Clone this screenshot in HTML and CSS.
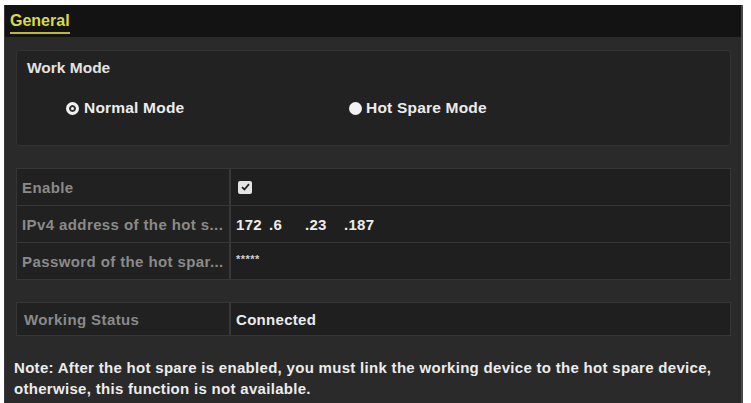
FILE: index.html
```html
<!DOCTYPE html>
<html>
<head>
<meta charset="utf-8">
<link rel="stylesheet" href="styles.css">
</head>
<body>
<div class="panel">
  <div class="tabs"><span class="tab">General</span></div>
  <div class="content">
    <div class="workmode">
      <div class="wm-title">Work Mode</div>
      <div class="radios">
        <label class="radio r1"><span class="dot checked"></span>Normal Mode</label>
        <label class="radio r2"><span class="dot"></span>Hot Spare Mode</label>
      </div>
    </div>
    <div class="table t1">
      <div class="row">
        <div class="lab">Enable</div>
        <div class="val"><span class="check"><svg width="9" height="8" viewBox="0 0 9 8"><path d="M1 4.2 L3.4 6.5 L8 1.2" fill="none" stroke="#222" stroke-width="1.8"/></svg></span></div>
      </div>
      <div class="row">
        <div class="lab">IPv4 address of the hot s...</div>
        <div class="val ip"><span class="s1">172</span><span class="s2">.6</span><span class="s3">.23</span><span class="s4">.187</span></div>
      </div>
      <div class="row">
        <div class="lab">Password of the hot spar...</div>
        <div class="val pw">*****</div>
      </div>
    </div>
    <div class="table t2">
      <div class="row">
        <div class="lab">Working Status</div>
        <div class="val">Connected</div>
      </div>
    </div>
    <p class="note">Note: After the hot spare is enabled, you must link the working device to the hot spare device,<br>otherwise, this function is not available.</p>
  </div>
</div>
</body>
</html>
```
FILE: styles.css
```css
html, body {
  margin: 0;
  padding: 0;
  background: #ffffff;
}
body {
  font-family: "Liberation Sans", Arial, sans-serif;
  width: 751px;
  height: 403px;
  overflow: hidden;
}
.panel {
  margin: 5px 0 0 4px;
  width: 739px;
  height: 398px;
  background: #2a2a2a;
  border-left: 1px solid #3a3a3a;
  border-right: 2px solid #4a4a4a;
  box-sizing: border-box;
}
.tabs {
  height: 32px;
  background: #131313;
  padding-left: 5px;
  display: flex;
  align-items: flex-end;
}
.tab {
  color: #d9d94a;
  font-weight: bold;
  font-size: 16px;
  line-height: 18px;
  padding-bottom: 2px;
  margin-bottom: 3px;
  border-bottom: 2px solid #b8b83a;
}
.content {
  padding: 13px 10px 0 11px;
}
.workmode {
  height: 96px;
  box-sizing: border-box;
  background: #222222;
  border: 1px solid #333333;
  border-radius: 4px;
  padding: 8px 0 0 10px;
}
.wm-title {
  color: #e2e2e2;
  font-weight: bold;
  font-size: 15.5px;
  line-height: 18px;
}
.radios {
  display: flex;
  margin-top: 22px;
  height: 18px;
  align-items: center;
}
.radio {
  display: flex;
  align-items: center;
  color: #ececec;
  font-weight: bold;
  font-size: 15.5px;
  line-height: 18px;
  letter-spacing: 0.2px;
}
.r1 {
  margin-left: 39px;
  width: 283px;
}
.dot {
  width: 13px;
  height: 13px;
  border-radius: 50%;
  background: #f2f2f2;
  margin-right: 5px;
  box-sizing: border-box;
}
.dot.checked {
  background: #f2f2f2;
  border: 3px solid #f2f2f2;
  box-shadow: inset 0 0 0 2px #333333;
}
.r2 .dot {
  margin-right: 4px;
}
.table {
  border: 1px solid #363636;
  background: #1f1f1f;
}
.t1 {
  margin-top: 22px;
}
.t2 {
  margin-top: 22px;
}
.row {
  display: flex;
  height: 36px;
  border-bottom: 1px solid #363636;
}
.row:last-child {
  border-bottom: none;
}
.t2 .row {
  height: 32px;
}
.lab {
  width: 214px;
  flex: none;
  box-sizing: border-box;
  padding-left: 5px;
  border-right: 2px solid #383838;
  background: #212121;
  color: #8a8a8a;
  font-weight: bold;
  font-size: 15px;
  letter-spacing: 0.4px;
  display: flex;
  align-items: center;
  white-space: nowrap;
}
.t2 .lab {
  padding-left: 7px;
}
.val {
  flex: 1;
  padding-left: 5px;
  color: #ececec;
  font-weight: bold;
  font-size: 15px;
  letter-spacing: 0.3px;
  display: flex;
  align-items: center;
}
.check {
  width: 14px;
  height: 13px;
  background: #e4e4e4;
  border-radius: 2px;
  display: flex;
  align-items: center;
  justify-content: center;
  margin-left: 2px;
}
.ip span {
  display: inline-block;
}
.s1 { width: 33px; }
.s2 { width: 36px; }
.s3 { width: 39px; }
.pw {
  font-size: 11px;
  align-items: flex-start;
  padding-top: 10px;
  box-sizing: border-box;
  color: #cfcfcf;
  letter-spacing: 0.5px;
}
.note {
  margin: 21px 0 0 -2px;
  color: #ececec;
  font-weight: bold;
  font-size: 15px;
  line-height: 21px;
  letter-spacing: 0.3px;
  white-space: nowrap;
}
```
